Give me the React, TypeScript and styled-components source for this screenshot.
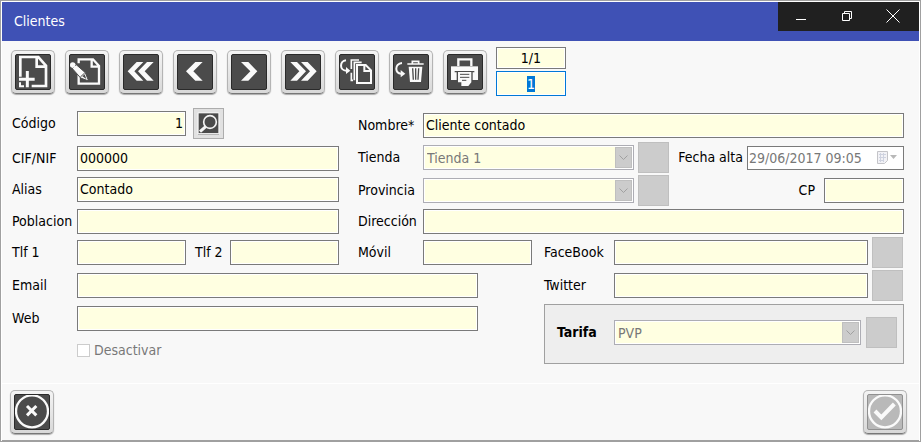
import React, { useEffect, useRef } from "react";
import styled, { createGlobalStyle, css } from "styled-components";

const GlobalStyle = createGlobalStyle`
  *, *::before, *::after { box-sizing: border-box; }
  body {
    margin: 0;
    background: #f8f8f8;
    font-family: "DejaVu Sans Condensed", "DejaVu Sans", sans-serif;
    font-size: 14px;
    color: #000;
  }
  button, input, select { font: inherit; color: inherit; }
`;

/* ---------- window frame ---------- */

const Window = styled.div`
  display: flex;
  flex-direction: column;
  min-height: 100vh;
  border: 1px solid #a0a0a0;
  background: #f8f8f8;
`;

const Frame = styled.div`
  flex: 1;
  display: flex;
  flex-direction: column;
  border: 1px solid #fff;
  border-bottom: 0;
`;

const TitleBar = styled.header`
  display: flex;
  align-items: flex-start;
  justify-content: space-between;
  height: 39px;
  padding-left: 12px;
  background: #3f51b5;
  color: #fff;
`;

const Title = styled.h1`
  margin: 0;
  font-size: 14px;
  font-weight: 400;
  line-height: 39px;
`;

const WindowControls = styled.div`
  display: flex;
  height: 29px;
  padding-right: 3px;
  background: #202020;
`;

const ControlButton = styled.button`
  display: grid;
  place-items: center;
  width: 46px;
  padding: 0 0 2px;
  border: 0;
  background: none;
  color: #fff;
`;

/* ---------- icon buttons ---------- */

const Toolbar = styled.div`
  display: flex;
  align-items: flex-start;
  gap: 9px;
  padding: 6px 9px 0;
`;

const ToolButton = styled.button`
  flex: none;
  width: 44px;
  height: 44px;
  padding: 3px;
  border: 1px solid #b4b4b4;
  border-bottom-color: #777;
  border-radius: 5px;
  background: linear-gradient(#f4f4f4, #d8d8d8);
  box-shadow: 0 1px 1px #aaa;
`;

const ToolFace = styled.span<{ $muted?: boolean }>`
  display: block;
  height: 100%;
  border: 1px solid ${(p) => (p.$muted ? "#909090" : "#2a2a2a")};
  border-radius: 2px;
  background: ${(p) => (p.$muted ? "#b9b9b9" : "#4b4b4b")};

  svg { display: block; width: 100%; height: 100%; }
`;

const ToolGroup = styled.div`
  display: flex;
  gap: 10px;
  padding-top: 3px;
`;

const Counter = styled.div`
  display: flex;
  flex-direction: column;
  gap: 2px;
  width: 70px;
`;

/* ---------- fields ---------- */

const fieldBox = css`
  min-width: 0;
  height: 25px;
  padding: 0 2px 2px;
  border: 1px solid #7a7a7a;
  border-radius: 0;
  outline: 0;
  background: #ffffe1;
  box-shadow: inset 0 0 0 1px #fff;
`;

const Field = styled.input<{ $width?: number; $align?: string }>`
  ${fieldBox}
  text-align: ${(p) => p.$align ?? "left"};
  ${(p) => (p.$width ? `flex: none; width: ${p.$width}px;` : "flex: 1; width: 0;")}
`;

const CounterField = styled.input`
  ${fieldBox}
  width: 100%;
  padding: 0 2px;
  text-align: center;

  &:read-only { height: 22px; }
  &:focus { border-color: #0078d7; }
  &::selection { background: #0078d7; color: #fff; }
`;

const Label = styled.label<{ $width?: number; $bold?: boolean }>`
  flex: none;
  width: ${(p) => (p.$width ? `${p.$width}px` : "auto")};
  font-weight: ${(p) => (p.$bold ? 700 : 400)};
  line-height: 17px;
  white-space: nowrap;
`;

const ComboBox = styled.span`
  flex: 1;
  display: grid;
  min-width: 0;
  border: 1px solid #adadb4;
  background: #fff;
  padding: 1px;
  height: 25px;

  > * { grid-area: 1 / 1; }
`;

const Select = styled.select`
  width: 100%;
  height: 21px;
  padding: 0 20px 0 2px;
  border: 0;
  border-radius: 0;
  appearance: none;
  background: #ffffe1;
  &:disabled { color: #787878; opacity: 1; }
`;

const ComboArrow = styled.span`
  display: grid;
  place-items: center;
  justify-self: end;
  width: 17px;
  height: 21px;
  border: 1px solid #bfbfbf;
  background: #ccc;
  pointer-events: none;
`;

const DateBox = styled.span`
  display: flex;
  align-items: center;
  width: 157px;
  height: 24px;
  padding-right: 5px;
  border: 1px solid #7a7a7a;
  background: #fff;
`;

const DateInput = styled.input`
  flex: 1;
  width: 0;
  padding: 0 1px;
  border: 0;
  background: none;
  &:disabled { color: #787878; }
`;

const SquareButton = styled.button`
  display: grid;
  place-items: center;
  flex: none;
  width: 31px;
  height: 31px;
  padding: 0;
  border: 1px solid #adadad;
  background: #e1e1e1;
  &:disabled { border-color: #bfbfbf; background: #ccc; }
`;

const CheckLabel = styled.label`
  display: flex;
  align-items: center;
  gap: 4px;
  color: #787878;
  line-height: 17px;
`;

const CheckBox = styled.input`
  appearance: none;
  width: 13px;
  height: 13px;
  margin: 0;
  border: 1px solid #ccc;
  background: #fff;
`;

/* ---------- form layout ---------- */

const Form = styled.form`
  flex: 1;
  display: flex;
  flex-direction: column;
  padding: 12px 15px 18px 10px;
`;

const UpperGrid = styled.div`
  display: grid;
  grid-template-columns: 327fr 546fr;
  column-gap: 19px;
`;

const LowerGrid = styled.div`
  display: grid;
  grid-template-columns: 466fr 360fr;
  column-gap: 66px;
`;

const Column = styled.div`
  min-width: 0;
`;

const Row = styled.div<{ $top?: number; $indent?: number; $end?: number }>`
  display: flex;
  align-items: center;
  margin-top: ${(p) => p.$top ?? 0}px;
  padding-left: ${(p) => p.$indent ?? 0}px;
  padding-right: ${(p) => p.$end ?? 0}px;
`;

const ComboRow = styled(Row)`
  display: grid;
  grid-template-columns: 65px minmax(0, 1fr) 35px 235px;

  > button { justify-self: end; }
`;

const Trailing = styled.div<{ $gap: number }>`
  display: flex;
  align-items: center;
  justify-content: flex-end;
  gap: ${(p) => p.$gap}px;
`;

const Gap = styled.span<{ $size: number }>`
  flex: none;
  width: ${(p) => p.$size}px;
`;

const RateGroup = styled.div`
  margin-top: 3px;
  padding: 12px 6px 15px 12px;
  border: 1px solid #a0a0a0;
  background: #eee;
`;

const Footer = styled.footer`
  display: flex;
  justify-content: space-between;
  padding: 6px 12px 6px 8px;
  border-top: 1px solid #fff;
  border-bottom: 1px solid #a0a0a0;
`;

/* ---------- icons: drawn at three units per pixel ---------- */

const ICON = "#fafafa";
const DARK = "#4b4b4b";

const Icon = ({ children }: { children: React.ReactNode }) => (
  <svg viewBox="15 15 102 102" fill="none" stroke={ICON} strokeWidth={7} aria-hidden="true">
    {children}
  </svg>
);

const icons: Record<string, React.ReactNode> = {
  Nuevo: (
    <>
      <path d="M28 80V21H82L105 47V108H62M77 21V50H105" strokeWidth={8} />
      <path d="M24 88H71M49 63V112" strokeWidth={9} />
      <path d="M27 97V109H39" strokeWidth={6} />
    </>
  ),
  Editar: (
    <>
      <path d="M41 40V28H84L102 48V101H41V74M80 28V50H102" />
      <path d="M16 49L27 38L61 68L71 93L47 84Z" fill={ICON} stroke={DARK} strokeWidth={3} />
      <path d="M22 55L34 44M46 81L59 69" stroke={DARK} strokeWidth={3} />
      <circle cx="23" cy="45" r="8" fill={ICON} stroke="none" />
      <path d="M52 79L59 73L64 87Z" fill={DARK} stroke="none" />
    </>
  ),
  Primero: (
    <path d="M53 36H73L46 64L73 92H53L26 64ZM84 36H104L77 64L104 92H84L57 64Z" fill={ICON} stroke="none" />
  ),
  Anterior: <path d="M67 36H89L61 64L89 92H67L39 64Z" fill={ICON} stroke="none" />,
  Siguiente: <path d="M64 36H42L70 64L42 92H64L91 64Z" fill={ICON} stroke="none" />,
  Último: (
    <path d="M48 36H28L55 64L28 92H48L75 64ZM80 36H60L87 64L60 92H80L107 64Z" fill={ICON} stroke="none" />
  ),
  Duplicar: (
    <>
      <path d="M33 31C13 33 13 62 34 62" strokeWidth={6} />
      <path d="M33 51L46 62L33 72Z" fill={ICON} stroke="none" />
      <path d="M49 57V30H72M49 68V91H54M58 91V37H80" strokeWidth={5} />
      <path d="M66 45H92L108 61V99H66ZM88 45V63H108" strokeWidth={6} />
    </>
  ),
  Borrar: (
    <>
      <path d="M39 39C16 41 17 72 37 71" strokeWidth={6} />
      <path d="M35 60L49 71L35 82Z" fill={ICON} stroke="none" />
      <path d="M55 42H104M70 40V34H89V40" strokeWidth={5} />
      <path d="M59 50H100L96 96H63Z" fill={ICON} stroke="none" />
      <path d="M71 55L73 89M80 55V89M89 55L87 89" stroke={DARK} strokeWidth={4} />
    </>
  ),
  Imprimir: (
    <>
      <path d="M46 48V28H85V48" strokeWidth={7} />
      <path d="M24 49H105V90H24Z" fill={ICON} stroke="none" />
      <path d="M35 63H94V67H89V91H41V67H35Z" fill={DARK} stroke="none" />
      <path d="M45 66H85V97L76 108H55V97H45Z" fill={ICON} stroke="none" />
      <path d="M51 73H79M51 82H79M57 91H70" stroke={DARK} strokeWidth={3} />
    </>
  ),
  Cancelar: (
    <>
      <circle cx="66" cy="64" r="48" strokeWidth={7} />
      <path d="M51 48L79 76M79 48L51 76" strokeWidth={9} />
    </>
  ),
  Aceptar: (
    <>
      <circle cx="66" cy="64" r="48" strokeWidth={7} />
      <path d="M36 63L55 82L94 42" strokeWidth={12} />
    </>
  ),
};

const IconButton = ({ name, disabled }: { name: string; disabled?: boolean }) => (
  <ToolButton type="button" aria-label={name} disabled={disabled}>
    <ToolFace $muted={disabled}>
      <Icon>{icons[name]}</Icon>
    </ToolFace>
  </ToolButton>
);

const SearchIcon = () => (
  <svg width="23" height="23" viewBox="0 0 69 69" fill="none" aria-hidden="true">
    <rect x="1" y="1" width="67" height="67" rx="4" fill="#f4f4f4" />
    <path d="M3 67H66" stroke="#aaa" strokeWidth="3" />
    <rect x="5" y="4" width="59" height="59" fill="#4b4b4b" />
    <circle cx="39" cy="30" r="19" stroke="#f4f4f4" strokeWidth="5" />
    <path d="M26 44L9 59" stroke="#f4f4f4" strokeWidth="9" />
  </svg>
);

const Combo = ({ id, value }: { id: string; value?: string }) => (
  <ComboBox>
    <Select id={id} disabled defaultValue={value ?? ""}>
      <option value={value ?? ""}>{value ?? ""}</option>
    </Select>
    <ComboArrow>
      <svg width="9" height="6" viewBox="0 0 9 6" fill="none" stroke="#a0a0a0" aria-hidden="true">
        <path d="M0.5 0.5L4.5 4.5L8.5 0.5" />
      </svg>
    </ComboArrow>
  </ComboBox>
);

const TextField = ({ id, label, labelWidth = 65, width, value, align }: {
  id: string; label: string; labelWidth?: number; width?: number; value?: string; align?: string;
}) => (
  <>
    <Label htmlFor={id} $width={labelWidth}>{label}</Label>
    <Field id={id} defaultValue={value} $width={width} $align={align} />
  </>
);

const toolNames = [
  "Nuevo", "Editar", "Primero", "Anterior", "Siguiente", "Último", "Duplicar", "Borrar", "Imprimir",
];

export default function App() {
  const current = useRef<HTMLInputElement>(null);

  useEffect(() => {
    current.current?.focus();
    current.current?.select();
  }, []);

  return (
    <Window>
      <GlobalStyle />
      <Frame>
        <TitleBar>
          <Title>Clientes</Title>
          <WindowControls>
            <ControlButton type="button" aria-label="Minimizar">
              <svg width="10" height="14" stroke="currentColor"><path d="M0 10.5H10" /></svg>
            </ControlButton>
            <ControlButton type="button" aria-label="Restaurar">
              <svg width="10" height="10" fill="none" stroke="currentColor">
                <path d="M0.5 2.5H7.5V9.5H0.5ZM2.5 2.5V0.5H9.5V7.5H7.5" />
              </svg>
            </ControlButton>
            <ControlButton type="button" aria-label="Cerrar">
              <svg width="14" height="14" fill="none" stroke="currentColor">
                <path d="M0.5 0.5L13.5 13.5M13.5 0.5L0.5 13.5" />
              </svg>
            </ControlButton>
          </WindowControls>
        </TitleBar>

        <Toolbar>
          <ToolGroup>
            {toolNames.map((name) => <IconButton key={name} name={name} />)}
          </ToolGroup>
          <Counter>
            <CounterField aria-label="Posición" readOnly value="1/1" />
            <CounterField ref={current} aria-label="Registro actual" defaultValue="1" />
          </Counter>
        </Toolbar>

        <Form>
          <UpperGrid>
            <Column>
              <Row>
                <TextField id="codigo" label="Código" width={109} value="1" align="right" />
                <Gap $size={7} />
                <SquareButton type="button" aria-label="Buscar"><SearchIcon /></SquareButton>
              </Row>
              <Row $top={7}><TextField id="cif" label="CIF/NIF" value="000000" /></Row>
              <Row $top={6}><TextField id="alias" label="Alias" value="Contado" /></Row>
              <Row $top={7}><TextField id="poblacion" label="Poblacion" /></Row>
              <Row $top={6}>
                <TextField id="tlf1" label="Tlf 1" />
                <Gap $size={9} />
                <TextField id="tlf2" label="Tlf 2" labelWidth={35} />
              </Row>
            </Column>

            <Column>
              <Row $top={5}><TextField id="nombre" label="Nombre*" value="Cliente contado" /></Row>
              <ComboRow $top={4}>
                <Label htmlFor="tienda">Tienda</Label>
                <Combo id="tienda" value="Tienda 1" />
                <SquareButton type="button" aria-label="Abrir tienda" disabled />
                <Trailing $gap={4}>
                  <Label htmlFor="fecha">Fecha alta</Label>
                  <DateBox>
                    <DateInput id="fecha" disabled defaultValue="29/06/2017 09:05" />
                    <svg width="21" height="13" viewBox="0 0 21 13" fill="none" aria-hidden="true">
                      <path d="M0.5 0.5H10.5V9.5L7.5 12.5H0.5Z" fill="#f2f2f6" stroke="#c4c4c8" />
                      <path d="M2 3.5H9M2 6.5H9M2 9.5H7M3.5 2V11M6.5 2V11" stroke="#cfd3e0" />
                      <path d="M13 4H20L16.5 8Z" fill="#b8b8b8" />
                    </svg>
                  </DateBox>
                </Trailing>
              </ComboRow>
              <ComboRow $top={2}>
                <Label htmlFor="provincia">Provincia</Label>
                <Combo id="provincia" />
                <SquareButton type="button" aria-label="Abrir provincia" disabled />
                <Trailing $gap={9}>
                  <Label htmlFor="cp">CP</Label>
                  <Field id="cp" $width={80} />
                </Trailing>
              </ComboRow>
              <Row $top={3}><TextField id="direccion" label="Dirección" /></Row>
              <Row $top={3} $end={1}>
                <TextField id="movil" label="Móvil" width={109} />
                <Gap $size={12} />
                <TextField id="facebook" label="FaceBook" labelWidth={70} />
                <Gap $size={4} />
                <SquareButton type="button" aria-label="Abrir FaceBook" disabled />
              </Row>
            </Column>
          </UpperGrid>

          <LowerGrid>
            <Column>
              <Row $top={5}><TextField id="email" label="Email" /></Row>
              <Row $top={8}><TextField id="web" label="Web" /></Row>
              <Row $top={11} $indent={65}>
                <CheckLabel><CheckBox type="checkbox" disabled />Desactivar</CheckLabel>
              </Row>
            </Column>
            <Column>
              <Row $top={2} $end={1}>
                <TextField id="twitter" label="Twitter" labelWidth={70} />
                <Gap $size={4} />
                <SquareButton type="button" aria-label="Abrir Twitter" disabled />
              </Row>
              <RateGroup>
                <Row>
                  <Label htmlFor="tarifa" $width={57} $bold>Tarifa</Label>
                  <Combo id="tarifa" value="PVP" />
                  <Gap $size={5} />
                  <SquareButton type="button" aria-label="Abrir tarifa" disabled />
                </Row>
              </RateGroup>
            </Column>
          </LowerGrid>
        </Form>

        <Footer>
          <IconButton name="Cancelar" />
          <IconButton name="Aceptar" disabled />
        </Footer>
      </Frame>
    </Window>
  );
}
